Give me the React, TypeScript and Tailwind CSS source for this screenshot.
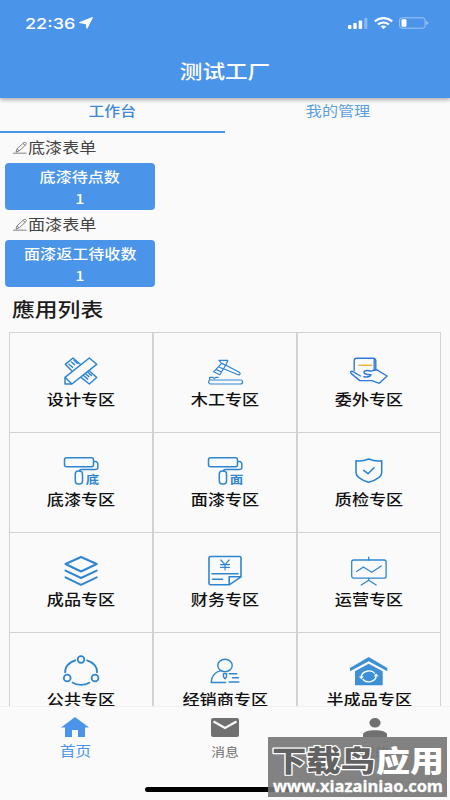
import React from 'react';

const BLUE = '#2f86d0';

const Glyph = ({ children, color = BLUE, width = 1.3 }: { children: React.ReactNode; color?: string; width?: number }) => (
    <svg
        className="block h-8 w-10"
        viewBox="0 0 40 32"
        fill="none"
        stroke={color}
        strokeWidth={width}
        strokeLinejoin="round"
        strokeLinecap="round"
    >
        {children}
    </svg>
);

const DesignIcon = () => (
    <Glyph width={1.5}>
        <path d="M4 29V22.3L28.3 3l7.4 6.3L10.9 29zM4 22.3L10.9 29" />
        <path d="M10.7 15.7L4.3 9.3 12 3l7.3 6.2M28.3 15.7l7.4 6.8L28.3 29l-8-6.3" />
        <path d="M8 9.2l3.5 3M10.5 7l3 2.6M13 5.2l3.4 3M22.5 20.5l4.2 3.6M24.6 18.8l3.2 2.8M26.6 17l3.8 3.4" />
    </Glyph>
);

const HammerIcon = () => (
    <Glyph width={1.2}>
        <rect x="3.6" y="25" width="34" height="4" rx="2" />
        <path d="M4.6 24.8v-2.4h3.6l1.2 1.2 1.2-1.2h2.6" />
        <path d="M14 5.3h8.8L21.4 9 14.8 19.8 8.6 16.8 16.6 8.4zM16.6 8.4l4.8 2.2M13.4 11.8l5 2.2M11 14.4l5.4 2.6" />
        <path d="M21 10.2l13.3 7c1.6.9.7 3.2-1.2 2.6L18.6 13.8" />
    </Glyph>
);

const HandIcon = () => (
    <Glyph color="#2f79dc" width={1.4}>
        <path d="M5.2 15.6V5.8a2.5 2.5 0 0 1 2.5-2.5h16.6a2.5 2.5 0 0 1 2.5 2.5V15M25.2 3.8V15" />
        <path d="M9.8 10.2h13" stroke="#efb53a" />
        <path d="M11.5 21l-8-4.6c-1.6-.6-2.4.8-1.4 2l8.6 7.2h12.2l7.4 2.7 7.8-7.3-10.2-6.2c-3 .2-4 .6-6.2 1.4-2.400-.9-5.400-.5-6.400-.1-1.200 2.500 1.200 3.500 6.600 3.700-.6 2.200-4 2.400-7.200 1.900" />
    </Glyph>
);

const RollerIcon = ({ mark }: { mark: string }) => (
    <Glyph width={1.5}>
        <rect x="3.5" y="2.7" width="29" height="9" rx="2" />
        <path d="M32.8 6.6h1.6A2.3 2.3 0 0 1 36.8 9v3.4a2.2 2.2 0 0 1-2.3 2.2H20.3a2 2 0 0 0-2 1.5" />
        <rect x="14.3" y="16" width="7.2" height="13.1" rx="3" />
        <text
            x="24.8"
            y="29.3"
            fontFamily="'Noto Sans CJK SC', sans-serif"
            fontSize="11.5"
            fontWeight="700"
            textLength="13.5"
            lengthAdjust="spacingAndGlyphs"
            fill={BLUE}
            stroke="none"
        >
            {mark}
        </text>
    </Glyph>
);

const ShieldIcon = () => (
    <Glyph color="#2380d4" width={1.5}>
        <path d="M7 5.7c5 .7 9-.2 12.7-1.7 3.7 1.5 8 2.4 13 1.7v12c0 4-6.5 7.6-13 9.6C13.5 25.3 7 21.7 7 17.7z" />
        <path d="M14.7 15.3l4.3 3.4 6-6" />
    </Glyph>
);

const LayersIcon = () => (
    <Glyph width={2}>
        <path d="M4.5 9L20 2l15.7 7L20 16.5zM4.5 15.6L20 23l15.7-7.4M4.5 22.3L20 29.8l15.7-7.5" />
    </Glyph>
);

const BillIcon = () => (
    <Glyph width={1.6}>
        <path d="M5.5 1.5h29A1.5 1.5 0 0 1 36 3v18.800L24.200 29.800H5.500A1.500 1.500 0 0 1 4 28.300V3a1.500 1.500 0 0 1 1.500-1.500zM24.200 29.800v-8H36M7 18.700h26M7.500 24.300h10" />
        <path d="M15.8 5l4.200 4.600L24.200 5M20 9.600v5.200M15.500 9.600h9M15.500 12.300h9" strokeWidth="1.2" />
    </Glyph>
);

const BoardIcon = () => (
    <Glyph width={1.3}>
        <rect x="2.7" y="5" width="34.4" height="18.2" rx="2" />
        <path d="M19.7 2.2V5M19.700 23.400v2M12.200 30l7.500-4.800L27.200 30M7.700 16.500l6.600-4.500 8.400 5.200L32.300 11" />
    </Glyph>
);

const CircleIcon = () => (
    <Glyph width={1.8}>
        <circle cx="20" cy="4.5" r="3.3" />
        <circle cx="6.2" cy="23" r="3.4" />
        <circle cx="34" cy="23" r="3.4" />
        <path d="M15 5.2C8 7.500 3.700 12 4.200 18M25.500 5.200c6.700 2.300 11 6.800 10.500 12.800M11 27.200c5 3.600 13 3.600 18 0" strokeLinecap="butt" />
    </Glyph>
);

const DealerIcon = () => (
    <Glyph width={1.4}>
        <ellipse cx="20" cy="10.5" rx="7.2" ry="6.2" />
        <path d="M15.8 15.6C9.5 17.2 6.3 21.5 6.2 27.500h14.300M24.200 18.700h7.500M27.500 22.800h6M24.200 27h9.700" />
        <path d="M18.500 18.600h3v3.200l-1.500 2-1.500-2z" />
    </Glyph>
);

const WarehouseIcon = () => (
    <svg className="block h-8 w-10" viewBox="0 0 40 32" fill="#3d8fd6">
        <path d="M1 13L19.7 2l18.6 11v3.2L19.7 6.3 1 16.2z" />
        <path d="M6 16.2l13.7-7.400 14 7.400v14.100H6z" />
        <path
            d="M12.300 22.500c0-7 10-8.500 13.500-3.800M27.200 20.300c0 7-10 8.500-13.500 3.800"
            fill="none"
            stroke="#fff"
            strokeWidth="1.400"
        />
        <path d="M9.800 21.500h5l-2.500 2.800zM24.700 21.300h5l-2.500-2.800z" fill="#fff" />
    </svg>
);

const PencilIcon = () => (
    <svg className="mt-px block h-[13px] w-[15px] shrink-0" viewBox="0 0 15 13" fill="none" stroke="#666" strokeWidth=".8">
        <path d="M0 12.200h13.500M3 11.200l.9-3.300 7-6.300c1.200-.9 3.300.6 2.200 1.900L6.200 9.800zM4 8l2.200 1.800M9.900 2.500l2.300 1.800" />
    </svg>
);

const apps = [
    { name: '设计专区', icon: <DesignIcon /> },
    { name: '木工专区', icon: <HammerIcon /> },
    { name: '委外专区', icon: <HandIcon /> },
    { name: '底漆专区', icon: <RollerIcon mark="底" /> },
    { name: '面漆专区', icon: <RollerIcon mark="面" /> },
    { name: '质检专区', icon: <ShieldIcon /> },
    { name: '成品专区', icon: <LayersIcon /> },
    { name: '财务专区', icon: <BillIcon /> },
    { name: '运营专区', icon: <BoardIcon /> },
    { name: '公共专区', icon: <CircleIcon /> },
    { name: '经销商专区', icon: <DealerIcon /> },
    { name: '半成品专区', icon: <WarehouseIcon /> },
];

const StatusBar = () => (
    <div className="flex h-[46px] items-center justify-between pr-[21px] pl-[25px]">
        <div className="flex items-center gap-1">
            <span className="w-[50px] font-['Inter'] text-[15px] leading-none font-medium">
                <span className="inline-block origin-left scale-x-[1.2]">22:36</span>
            </span>
            <svg className="h-3 w-[14px]" viewBox="0 0 14 12" fill="#fff">
                <path d="M13.4.5L8 11.400 7 6.600.5 5.600z" stroke="#fff" strokeWidth="1" strokeLinejoin="round" />
            </svg>
        </div>
        <div className="flex items-center gap-[6px]">
            <svg className="h-[11px] w-5" viewBox="0 0 20 11" fill="#fff">
                <rect x="0" y="7" width="3.4" height="4" rx=".8" />
                <rect x="5.3" y="5" width="3.4" height="6" rx=".8" />
                <rect x="10.7" y="2.5" width="3.4" height="8.5" rx=".8" />
                <rect x="16.2" y="0" width="3.2" height="11" rx=".8" opacity=".35" />
            </svg>
            <svg className="h-3 w-[19px]" viewBox="0 0 19 12" fill="none" stroke="#fff" strokeWidth="2.2">
                <path d="M.8 4.300c5-4.300 12.400-4.300 17.400 0M4 7.500c3.200-2.600 7.800-2.600 11 0" />
                <path d="M6.500 9.500c1.800-1.300 4.200-1.300 6 0l-3 2.500z" fill="#fff" stroke="none" />
            </svg>
            <svg className="h-3 w-[30px]" viewBox="0 0 30 12">
                <rect x=".6" y=".8" width="25.5" height="10.4" rx="2.5" fill="none" stroke="#a3c9f6" />
                <rect x="2.5" y="2.3" width="5" height="7.4" rx="1" fill="#fff" />
                <path d="M27.3 3.800l2.400 2.200-2.400 2.200z" fill="#a3c9f6" />
            </svg>
        </div>
    </div>
);

const SectionCard = ({ title, label, count }: { title: string; label: string; count: number }) => (
    <section className="h-[77px] pl-[5px]">
        <div className="flex h-[29px] items-center pb-[3px] pl-2 text-[#444]">
            <PencilIcon />
            <span className="origin-left scale-x-[1.18] text-[14.5px] leading-none">{title}</span>
        </div>
        <div className="flex h-[47px] w-[150px] flex-col items-center rounded bg-[#4a94e9] pt-[2px] text-[13.5px] leading-[22px] font-medium text-white">
            <span className="scale-x-[1.19]">{label}</span>
            <span className="scale-x-[1.19]">{count}</span>
        </div>
    </section>
);

const BottomNav = () => (
    <nav className="relative grid h-[94px] shrink-0 grid-cols-3 border-t border-[#f0f0f0] bg-[#fafafa]">
        <div className="flex flex-col items-center text-[#4a94e9]">
            <svg className="mt-[10px] h-5 w-7" viewBox="0 0 28 20" fill="currentColor">
                <path d="M14 0L0 10.500h4V20h7v-7h6v7h7v-9.500h4z" />
            </svg>
            <span className="mt-[5px] scale-x-[1.16] text-[13.5px] leading-4">首页</span>
        </div>
        <div className="flex flex-col items-center text-[#707070]">
            <svg className="mt-[11px] h-[19px] w-7" viewBox="0 0 28 19">
                <rect width="28" height="19" rx="2" fill="#707070" />
                <path d="M2.500 3.500L14 10l11.500-6.500" fill="none" stroke="#fafafa" strokeWidth="2.2" />
            </svg>
            <span className="mt-[7px] scale-x-[1.15] text-[12px] leading-4">消息</span>
        </div>
        <div className="flex flex-col items-center text-[#707070]">
            <svg className="mt-[11px] h-[19px] w-6" viewBox="0 0 24 19" fill="currentColor">
                <ellipse cx="12" cy="4.8" rx="5.6" ry="4.8" />
                <path d="M0 19v-2.500C0 10.800 24 10.800 24 16.500V19z" />
            </svg>
            <span className="mt-[7px] scale-x-[1.15] text-[12px] leading-4">我的</span>
        </div>
        <div className="absolute bottom-[8px] left-[145px] h-[5px] w-[160px] rounded-full bg-black" />
        <div className="absolute top-[30px] left-[268px] h-[60px] w-[179px] bg-[#747474]/90">
            <svg className="block h-[60px] w-[179px]" viewBox="0 0 179 60" strokeLinejoin="round">
                <g fontFamily="'Noto Sans CJK SC', sans-serif" fontSize="29" fontWeight="900" style={{ paintOrder: 'stroke' }}>
                    <text x="4" y="35" textLength="103" lengthAdjust="spacingAndGlyphs" fill="#626262" stroke="#fff" strokeWidth="2.4">
                        下载鸟
                    </text>
                    <text x="108" y="35" textLength="68" lengthAdjust="spacingAndGlyphs" fill="#fff">
                        应用
                    </text>
                </g>
                <text
                    x="5"
                    y="54.5"
                    fontFamily="'Open Sans', sans-serif"
                    fontSize="16"
                    fontWeight="700"
                    textLength="170"
                    lengthAdjust="spacingAndGlyphs"
                    fill="#fff"
                    stroke="#fff"
                    strokeWidth=".3"
                >
                    www.xiazainiao.com
                </text>
            </svg>
        </div>
    </nav>
);

export default function App() {
    return (
        <div className="flex h-[800px] w-[450px] flex-col overflow-hidden bg-[#fafafa] font-['Noto_Sans_CJK_SC',sans-serif]">
            <header className="relative z-10 h-[98px] shrink-0 bg-[#4a94e9] text-white shadow-[0_2px_4px_rgba(0,0,0,0.3)]">
                <StatusBar />
                <h1 className="flex h-[49px] items-center justify-center text-[19.5px] leading-none font-medium">
                    <span className="scale-x-[1.16]">测试工厂</span>
                </h1>
            </header>

            <div className="grid h-[35px] shrink-0 grid-cols-2 text-center text-[13.5px] leading-[24px]">
                <div className="border-b-2 border-[#4a94e9] font-medium text-[#4089d3]">
                    <span className="inline-block scale-x-[1.17]">工作台</span>
                </div>
                <div className="text-[#5a9fe0]">
                    <span className="inline-block scale-x-[1.19]">我的管理</span>
                </div>
            </div>

            <main className="min-h-0 flex-1 overflow-hidden pt-px">
                <SectionCard title="底漆表单" label="底漆待点数" count={1} />
                <SectionCard title="面漆表单" label="面漆返工待收数" count={1} />
                <h2 className="h-[44px] pl-3 text-[19px] leading-[42px] font-medium text-[#1c1c1c]">
                    <span className="inline-block origin-left scale-x-[1.2]">應用列表</span>
                </h2>
                <div className="ml-[9px] grid w-[432px] grid-cols-3 border-t border-[#d2d2d2]">
                    {apps.map(app => (
                        <div
                            key={app.name}
                            className="flex h-[100px] flex-col items-center border-x border-b border-[#d2d2d2] pt-[22px] whitespace-nowrap"
                        >
                            {app.icon}
                            <span className="mt-px scale-x-[1.18] text-[14.5px] leading-[22px] font-medium text-[#111]">{app.name}</span>
                        </div>
                    ))}
                </div>
            </main>

            <BottomNav />
        </div>
    );
}
